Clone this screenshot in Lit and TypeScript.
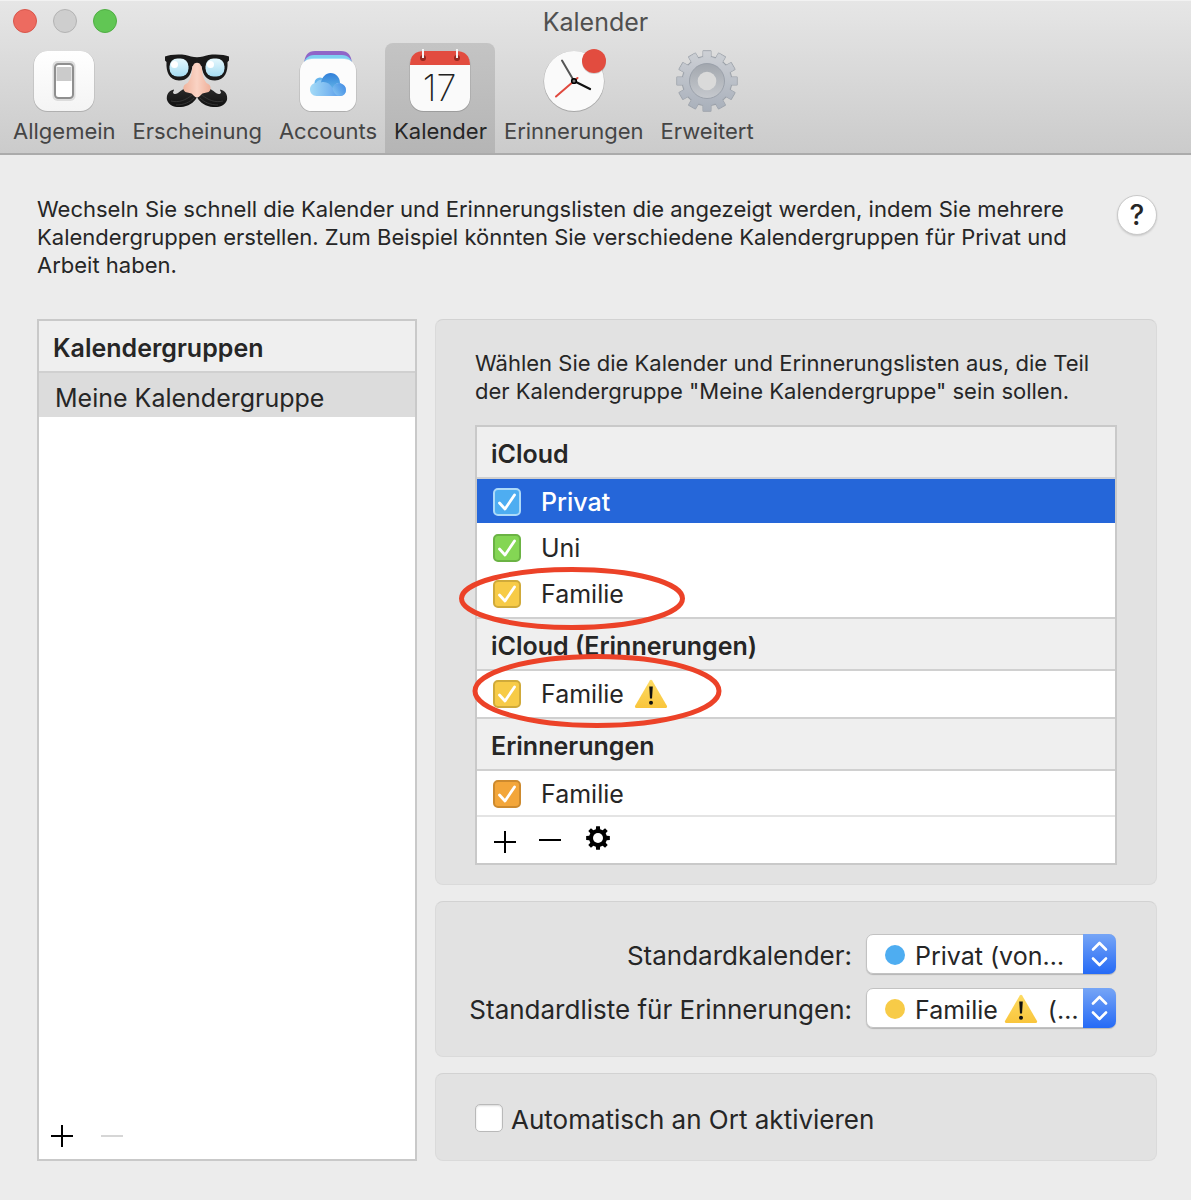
import { LitElement, html, css, svg, nothing } from "lit";
import { customElement, property, state } from "lit/decorators.js";
import { classMap } from "lit/directives/class-map.js";

/** Outline of a cog wheel with `teeth` tapered teeth around (c, c). */
function cog(c: number, teeth: number, outer: number, body: number, tip: number, root: number): string {
  const at = (radius: number, angle: number) =>
    `${(c + radius * Math.sin(angle)).toFixed(2)} ${(c - radius * Math.cos(angle)).toFixed(2)}`;
  const points: string[] = [];
  for (let i = 0; i < teeth; i++) {
    const a = (i * 2 * Math.PI) / teeth;
    points.push(at(body, a - root), at(outer, a - tip), at(outer, a + tip), at(body, a + root));
  }
  return `M${points.join("L")}Z`;
}

const glyphs = {
  allgemein: svg`
    <defs><linearGradient id="g" x2="0" y2="1"><stop stop-color="#fff"/><stop offset="1" stop-color="#f4f4f4"/></linearGradient></defs>
    <rect x="1.5" y="2" width="61" height="61" rx="14" fill="#000" opacity=".16"/>
    <rect x="2" y="2" width="60" height="60" rx="13.5" fill="url(#g)"/>
    <rect x="20.5" y="12" width="23" height="40" rx="5" fill="#dcdcdc"/>
    <rect x="23" y="15" width="18" height="34" rx="3.5" fill="#fff" stroke="#8f8f8f" stroke-width="2"/>
    <path d="M24.500 18h15v14h-15z" fill="#cbcbcb"/>`,
  erscheinung: svg`
    <defs>
      <linearGradient id="lens" x2="0" y2="1"><stop stop-color="#e6f8fd"/><stop offset="1" stop-color="#a5dcf2"/></linearGradient>
      <linearGradient id="nose"><stop stop-color="#f0b49d"/><stop offset=".5" stop-color="#fad3c4"/><stop offset="1" stop-color="#efb09a"/></linearGradient>
      <linearGradient id="hair" x2="0" y2="1"><stop stop-color="#2c2c2c"/><stop offset="1" stop-color="#111"/></linearGradient>
    </defs>
    <path d="M31 38C26 37 20 38 15.500 42C12 45.500 9 46 8 43.500C8 42.500 9 42 9 40.500C4 41 1 46 2 51C4 57 10 58.500 16 58C23 57.500 29 54 32 48C35 54 41 57.500 48 58C54 58.500 60 57 62 51C63 46 60 41 55 40.500C55 42 56 42.500 56 43.500C55 46 52 45.500 48.500 42C44 38 38 37 33 38Z" fill="url(#hair)"/>
    <path d="M6 52C14 54 21 51 27 46M11 56C19 56 25 53 29 49M58 52C50 54 43 51 37 46M53 56C45 56 39 53 35 49" fill="none" stroke="#3c3c3c" stroke-width=".8"/>
    <path d="M0 7.500C5 5 20 4.500 26 7.500C30 8.500 34 8.500 38 7.500C44 4.500 59 5 64 7.500V11.500L62.500 13C63 23 60 31 50 31.500C42 31.500 38 27 36.500 17H27.500C26 27 22 31.500 14 31.500C4 31 1 23 1.500 13L0 11.500Z" fill="#191919"/>
    <rect x="4.500" y="9.500" width="19" height="18" rx="8" fill="url(#lens)"/>
    <rect x="40.500" y="9.500" width="19" height="18" rx="8" fill="url(#lens)"/>
    <circle cx="9.500" cy="15.500" r="3.500" fill="#fff"/><circle cx="45.500" cy="15.500" r="3.500" fill="#fff"/>
    <path d="M32 13.700C28.500 13.700 27.500 17 27 21C26.500 27 25 31 22.500 34C18.500 35.500 17.500 39 19 41.500C20.500 44 24 43.500 26.500 44.500C28.500 46 29.500 48.500 32 48.500C34.500 48.500 35.500 46 37.500 44.500C40 43.500 43.500 44 45 41.500C46.500 39 45.500 35.500 41.500 34C39 31 37.500 27 37 21C36.500 17 35.500 13.700 32 13.700Z" fill="url(#nose)"/>`,
  accounts: svg`
    <defs>
      <linearGradient id="c" x1="0" y1="1" x2="1" y2="0"><stop stop-color="#a2dcf6"/><stop offset=".5" stop-color="#65aee9"/><stop offset="1" stop-color="#3a85e0"/></linearGradient>
      <linearGradient id="d" x2="0" y2="1"><stop stop-color="#317fd9"/><stop offset="1" stop-color="#5eb0e6"/></linearGradient>
      <linearGradient id="e"><stop stop-color="#a4dbf7"/><stop offset=".55" stop-color="#78b6f0"/><stop offset="1" stop-color="#4a8fe8"/></linearGradient>
    </defs>
    <path d="M8 14C9 6 12 2 19 2H45C52 2 55 6 56 14Z" fill="#8f65c8"/>
    <path d="M7 17C8 10 12 6 18 6H46C52 6 56 10 57 17Z" fill="#7fd0f2"/>
    <path d="M6 18C8 12 12 9 18 9H46C52 9 56 12 58 18Z" fill="#a7e1f8"/>
    <rect x="3.500" y="10" width="57" height="53" rx="12" fill="#000" opacity=".17"/>
    <rect x="4" y="10" width="56" height="52" rx="11.500" fill="#fcfcfc"/>
    <circle cx="24" cy="34" r="5.500" fill="#67b5ec"/>
    <path d="M20.500 47C16.500 47 14 44 14 40.500C14 36.500 17 34 20 34C21 32 24 30 27 31C33 29 37 33 38 36C40 34 44 33 46 35C51 37 51 44 47.500 46C46.500 46.800 45.500 47 44 47Z" fill="url(#e)"/>
    <path d="M25 33.500C26 28 30 24 34.500 24C40 24 44 28.500 44 34C40 34 37.500 36 36.500 39C34 34 29 32 25 33.500Z" fill="url(#d)"/>
    <path d="M36.500 39C38 35 42 33 46 35C51 37 51 44 47.500 46C46 47 43 47 41 46.500C38.500 45 37 42 36.500 39Z" fill="url(#c)" opacity=".55"/>`,
  kalender: svg`
    <rect x="1.500" y="2" width="61" height="61" rx="14" fill="#000" opacity=".16"/>
    <rect x="2" y="2" width="60" height="60" rx="13.500" fill="#fafafa"/>
    <path d="M2 16C2 7 7 2 15.500 2H48.500C57 2 62 7 62 16Z" fill="#e24c3f"/>
    <circle cx="15" cy="9" r="3" fill="#96281f"/><circle cx="49" cy="9" r="3" fill="#96281f"/>
    <path d="M15 0V9M49 0V9" stroke="#f4f4f4" stroke-width="2"/>
    <text x="31.500" y="51.500" text-anchor="middle" font-family="Inter, sans-serif" font-weight="200" font-size="36" fill="#222">17</text>`,
  erinnerungen: svg`
    <circle cx="32" cy="32.500" r="30.500" fill="#000" opacity=".2"/>
    <circle cx="32" cy="32" r="30" fill="#fafafa"/>
    <path d="M32 32L20 11.500" stroke="#555" stroke-width="2" stroke-linecap="round"/>
    <path d="M14 47.500L35.500 29" stroke="#e0493e" stroke-width="2" stroke-linecap="round"/>
    <path d="M32 32L48 40" stroke="#111" stroke-width="2.200" stroke-linecap="round"/>
    <circle cx="32" cy="32" r="2.300" fill="#777" stroke="#000" stroke-width="1.600"/>
    <circle cx="52" cy="13" r="12" fill="#000" opacity=".16"/>
    <circle cx="52" cy="12" r="12" fill="#e24c3f"/>`,
  erweitert: svg`
    <defs>
      <linearGradient id="h" x2="0" y2="1"><stop stop-color="#cdd0d5"/><stop offset="1" stop-color="#a9b0bb"/></linearGradient>
      <linearGradient id="i" x2="0" y2="1"><stop stop-color="#a2a7ae"/><stop offset="1" stop-color="#c6c9ce"/></linearGradient>
    </defs>
    <path d=${cog(32, 12, 30, 24.5, 0.12, 0.15)} fill="#9aa0a8" stroke="#9aa0a8" stroke-width="1.800" stroke-linejoin="round"/>
    <path d=${cog(32, 12, 29.8, 24, 0.12, 0.15)} fill="url(#h)" stroke="url(#h)" stroke-width=".8" stroke-linejoin="round"/>
    <circle cx="32" cy="32" r="17.500" fill="url(#i)" stroke="#949ba4" stroke-width=".8"/>
    <circle cx="32" cy="32" r="9.300" fill="#dadada"/>`,
};

type GlyphName = keyof typeof glyphs;

const TABS: { id: GlyphName; label: string }[] = [
  { id: "allgemein", label: "Allgemein" },
  { id: "erscheinung", label: "Erscheinung" },
  { id: "accounts", label: "Accounts" },
  { id: "kalender", label: "Kalender" },
  { id: "erinnerungen", label: "Erinnerungen" },
  { id: "erweitert", label: "Erweitert" },
];

interface CalendarItem {
  id: string;
  name: string;
  tone: "blue" | "green" | "yellow" | "orange";
  warn?: boolean;
  mark?: "upper" | "lower";
}

const GROUPS: { title: string; items: CalendarItem[] }[] = [
  {
    title: "iCloud",
    items: [
      { id: "privat", name: "Privat", tone: "blue" },
      { id: "uni", name: "Uni", tone: "green" },
      { id: "familie", name: "Familie", tone: "yellow", mark: "upper" },
    ],
  },
  {
    title: "iCloud (Erinnerungen)",
    items: [{ id: "familie-icloud", name: "Familie", tone: "yellow", warn: true, mark: "lower" }],
  },
  { title: "Erinnerungen", items: [{ id: "familie-lokal", name: "Familie", tone: "orange" }] },
];

const warning = () => html`
  <svg class="warning" viewBox="0 0 34 30" width="34" height="30" aria-hidden="true">
    <defs><linearGradient id="w" x2="0" y2="1"><stop stop-color="#fddb63"/><stop offset="1" stop-color="#f9c53c"/></linearGradient></defs>
    <path d="M15.800 1.500Q17 0 18.200 1.500L33 27Q33.600 28.600 32 29H2Q.4 28.600 1 27Z" fill="url(#w)"/>
    <path d="M15.200 7.500H18.800L18 19.500H16Z" fill="#111"/>
    <circle cx="17" cy="23.800" r="2" fill="#111"/>
  </svg>`;

@customElement("toolbar-item")
class ToolbarItem extends LitElement {
  static styles = css`
    :host { display: block; }
    .item {
      display: flex;
      flex-direction: column;
      align-items: center;
      gap: 4px;
      padding: 6px 8px 8px 9px;
      border: 0;
      border-radius: 8px 8px 0 0;
      background: none;
      color: #454545;
      font: 22px/28px Inter, "Liberation Sans", sans-serif;
    }
    .item.active { background: linear-gradient(#c4c4c4, #b5b5b5); color: #262626; }
    .icon { display: block; width: 64px; height: 64px; overflow: visible; }
  `;
  @property() glyph: GlyphName = "allgemein";
  @property() label = "";
  @property({ type: Boolean }) active = false;

  render() {
    return html`
      <button class=${classMap({ item: true, active: this.active })} type="button" aria-pressed=${this.active}>
        <svg class="icon" viewBox="0 0 64 64" aria-hidden="true">${glyphs[this.glyph]}</svg>
        ${this.label}
      </button>`;
  }
}

@customElement("app-root")
class AppRoot extends LitElement {
  static styles = css`
    * { box-sizing: border-box; }
    :host {
      display: flex;
      flex-direction: column;
      min-height: 100vh;
      background: #ececec;
      color: #262626;
      font: 25px/32px Inter, "Liberation Sans", sans-serif;
    }
    button { padding: 0; border: 0; background: none; color: inherit; font: inherit; }
    svg { display: block; }
    h1, h2, p { margin: 0; }

    .chrome {
      border-top: 1px solid #f2f2f2;
      border-bottom: 2px solid #ababab;
      background: linear-gradient(#e6e6e6, #cbcbcb);
    }
    .titlebar {
      display: grid;
      grid-template-columns: 1fr auto 1fr;
      align-items: center;
      height: 42px;
      padding: 0 13px;
    }
    .lights { display: flex; gap: 16px; padding-bottom: 2px; }
    .light { width: 24px; height: 24px; border: 1px solid; border-radius: 50%; }
    .close { background: #ed6b60; border-color: #d8564b; }
    .minimise { background: #cecece; border-color: #b3b3b3; }
    .zoom { background: #61c654; border-color: #4fae43; }
    .title { color: #505050; font-size: 25px; font-weight: 400; }
    .toolbar { display: flex; padding: 0 4px; }

    .content {
      flex: 1;
      display: flex;
      flex-direction: column;
      gap: 40px;
      padding: 40px 34px 39px 37px;
    }
    .intro { display: flex; justify-content: space-between; align-items: flex-start; gap: 40px; }
    .copy { font-size: 22px; line-height: 28px; }
    .help {
      flex: none;
      width: 40px;
      height: 40px;
      border-radius: 50%;
      background: #fff;
      border: 1px solid #c9c9c9;
      box-shadow: 0 1px 2px rgba(0, 0, 0, 0.15);
      font-size: 28px;
      font-weight: 500;
    }
    .columns {
      flex: 1;
      display: grid;
      grid-template-columns: minmax(0, 380fr) minmax(0, 722fr);
      gap: 18px;
    }
    .details { display: flex; flex-direction: column; gap: 16px; }
    .panel {
      padding: 29px 39px 19px;
      border: 1px solid #dadada;
      border-top-color: #d2d2d2;
      border-radius: 8px;
      background: #e2e2e2;
    }

    .list { display: flex; flex-direction: column; border: 2px solid #c9c9c9; background: #fff; }
    .copy + .list { margin-top: 20px; }
    .heading {
      height: 52px;
      padding: 0 14px;
      border-bottom: 2px solid #d0d0d0;
      background: #efefef;
      font-size: 25px;
      font-weight: 600;
      line-height: 55px;
    }
    .group + .group .heading { height: 54px; border-top: 2px solid #d0d0d0; }
    .row {
      position: relative;
      display: flex;
      align-items: center;
      height: 44px;
      margin-bottom: 2px;
      padding: 2px 16px 0;
    }
    .row.selected { background: #2566d9; color: #fff; font-weight: 500; }
    .group:last-of-type .row { margin-bottom: 0; }
    .entry { display: flex; align-items: center; gap: 20px; line-height: 42px; }
    .name { display: flex; align-items: center; gap: 10px; }
    .current { height: 44px; padding: 5px 16px 0; background: #dcdcdc; text-align: left; }
    .footer { display: flex; align-items: center; gap: 22px; height: 48px; padding: 0 16px; border-top: 2px solid #e4e4e4; }
    .footer.wide { gap: 26px; height: 46px; margin-top: auto; padding: 0 11px; border: 0; }
    .mini { width: 24px; height: 24px; }
    .mini svg { overflow: visible; }
    .mini:disabled { color: #d6d6d6; }

    .check { display: grid; width: 28px; height: 28px; }
    .check > * { grid-area: 1 / 1; }
    .box {
      appearance: none;
      width: 28px;
      height: 28px;
      margin: 0;
      border: 2px solid;
      border-radius: 5px;
    }
    .tick { display: none; pointer-events: none; }
    .box:checked + .tick { display: block; }
    .blue { background: #4eadf1; border-color: #addaf9; }
    .green { background: #84d654; border-color: #6bb344; }
    .yellow { background: #f7cb47; border-color: #d0aa3a; }
    .orange { background: #f3a63a; border-color: #cd8a2e; }
    .plain { background: #fff; border: 1px solid #b9b9b9; box-shadow: inset 0 1px 2px rgba(0, 0, 0, 0.15); }

    .mark { position: absolute; z-index: 1; pointer-events: none; fill: none; stroke: #ec4228; stroke-width: 5; }
    .mark.upper { left: -18px; top: -4px; }
    .mark.lower { left: -5px; top: -17px; }

    .choices {
      display: grid;
      grid-template-columns: 1fr 250px;
      align-items: center;
      gap: 14px;
      padding: 32px 40px 28px 20px;
    }
    .caption { font-size: 26px; text-align: right; white-space: nowrap; padding-top: 3px; }
    .popup { position: relative; height: 40px; border-radius: 7px; box-shadow: 0 1px 1px rgba(0, 0, 0, 0.2); }
    .select {
      appearance: none;
      width: 100%;
      height: 40px;
      padding: 3px 34px 0 48px;
      border: 1px solid #c2c2c2;
      border-radius: 7px;
      background: #fff;
      color: inherit;
      font: inherit;
    }
    .swatch { position: absolute; left: 19px; top: 11px; width: 20px; height: 20px; border-radius: 50%; pointer-events: none; }
    .swatch.blue, .swatch.yellow { border: 0; }
    .arrows {
      position: absolute;
      right: 0;
      top: 0;
      width: 33px;
      height: 40px;
      border-radius: 0 7px 7px 0;
      background: linear-gradient(#76a5f6, #256af6);
      pointer-events: none;
    }
    .popup .warning { position: absolute; left: 138px; top: 6px; pointer-events: none; }
    .place { padding: 28px 39px 26px; font-size: 26px; }
    .place .entry { gap: 8px; line-height: 28px; }
    .place .name { padding-top: 4px; }
  `;

  @state() private checked = new Set(["privat", "uni", "familie", "familie-icloud", "familie-lokal"]);
  @state() private selected = "privat";

  private toggle(id: string) {
    const next = new Set(this.checked);
    next.has(id) ? next.delete(id) : next.add(id);
    this.checked = next;
  }

  private checkbox(id: string, tone: string) {
    return html`
      <span class="check">
        <input class="box ${tone}" type="checkbox" id=${id} .checked=${this.checked.has(id)} @change=${() => this.toggle(id)} />
        <svg class="tick" viewBox="0 0 28 28" width="28" height="28" aria-hidden="true">
          <path d="M6.500 15L12 21L21.500 7" fill="none" stroke="#fff" stroke-width="2.800" stroke-linecap="round" stroke-linejoin="round"/>
        </svg>
      </span>`;
  }

  private mark(kind: "upper" | "lower") {
    return kind === "upper"
      ? html`<svg class="mark upper" width="226" height="64" aria-hidden="true"><ellipse cx="113" cy="31.500" rx="110.500" ry="29"/></svg>`
      : html`<svg class="mark lower" width="250" height="74" aria-hidden="true"><ellipse cx="125" cy="37" rx="122" ry="34.500"/></svg>`;
  }

  private row(item: CalendarItem) {
    return html`
      <div class=${classMap({ row: true, selected: item.id === this.selected })} @click=${() => (this.selected = item.id)}>
        <div class="entry">
          ${this.checkbox(item.id, item.tone)}
          <label class="name" for=${item.id}>${item.name}${item.warn ? warning() : nothing}</label>
        </div>
        ${item.mark ? this.mark(item.mark) : nothing}
      </div>`;
  }

  private mini(label: string, shape: unknown, disabled = false) {
    return html`
      <button class="mini" type="button" aria-label=${label} ?disabled=${disabled}>
        <svg viewBox="0 0 24 24" width="24" height="24">${shape}</svg>
      </button>`;
  }

  private popup(id: string, caption: string, tone: string, value: string, warn = false) {
    return html`
      <label class="caption" for=${id}>${caption}</label>
      <div class="popup">
        <select class="select" id=${id}><option>${value}</option></select>
        <span class="swatch ${tone}"></span>
        ${warn ? warning() : nothing}
        <svg class="arrows" viewBox="0 0 33 40" aria-hidden="true">
          <path d="M10 15.500L16.500 9L23 15.500M10 24.500L16.500 31L23 24.500" fill="none" stroke="#fff" stroke-width="2.600" stroke-linecap="round" stroke-linejoin="round"/>
        </svg>
      </div>`;
  }

  render() {
    const minus = svg`<path d="M1 12H23" stroke="currentColor" stroke-width="2"/>`;
    const blackMinus = svg`<path d="M0 12H22" stroke="#000" stroke-width="2"/>`;
    const plus = svg`<path d="M1 12H23M12 1V23" stroke="#000" stroke-width="2"/>`;
    const plusLow = svg`<path d="M1 14H23M12 3V25" stroke="#000" stroke-width="2"/>`;
    const gear = svg`
      <g transform="translate(1 -2)">
        <path d=${cog(12, 8, 12, 9, 0.16, 0.24)} fill="#000"/>
        <circle cx="12" cy="12" r="5" fill="#fff"/>
      </g>`;
    return html`
      <header class="chrome">
        <div class="titlebar">
          <div class="lights">
            <button class="light close" type="button" aria-label="Schließen"></button>
            <button class="light minimise" type="button" aria-label="Minimieren" disabled></button>
            <button class="light zoom" type="button" aria-label="Zoomen"></button>
          </div>
          <h1 class="title">Kalender</h1>
        </div>
        <nav class="toolbar">
          ${TABS.map((tab) => html`<toolbar-item glyph=${tab.id} label=${tab.label} ?active=${tab.id === "kalender"}></toolbar-item>`)}
        </nav>
      </header>
      <main class="content">
        <section class="intro">
          <p class="copy">
            Wechseln Sie schnell die Kalender und Erinnerungslisten die angezeigt werden, indem Sie mehrere
            Kalendergruppen erstellen. Zum Beispiel könnten Sie verschiedene Kalendergruppen für Privat und
            Arbeit haben.
          </p>
          <button class="help" type="button" aria-label="Hilfe">?</button>
        </section>
        <div class="columns">
          <section class="list">
            <h2 class="heading">Kalendergruppen</h2>
            <button class="current" type="button">Meine Kalendergruppe</button>
            <div class="footer wide">
              ${this.mini("Gruppe hinzufügen", plus)}
              ${this.mini("Gruppe entfernen", minus, true)}
            </div>
          </section>
          <div class="details">
            <section class="panel">
              <p class="copy">
                Wählen Sie die Kalender und Erinnerungslisten aus, die Teil
                der Kalendergruppe "Meine Kalendergruppe" sein sollen.
              </p>
              <div class="list">
                ${GROUPS.map((group) => html`
                  <section class="group">
                    <h2 class="heading">${group.title}</h2>
                    ${group.items.map((item) => this.row(item))}
                  </section>`)}
                <div class="footer">
                  ${this.mini("Kalender hinzufügen", plusLow)}
                  ${this.mini("Kalender entfernen", blackMinus)}
                  ${this.mini("Optionen", gear)}
                </div>
              </div>
            </section>
            <section class="panel choices">
              ${this.popup("std-kalender", "Standardkalender:", "blue", "Privat (von…")}
              ${this.popup("std-liste", "Standardliste für Erinnerungen:", "yellow", "Familie\u2003\u2003(…", true)}
            </section>
            <section class="panel place">
              <div class="entry">
                ${this.checkbox("auto-ort", "plain")}
                <label class="name" for="auto-ort">Automatisch an Ort aktivieren</label>
              </div>
            </section>
          </div>
        </div>
      </main>`;
  }
}
